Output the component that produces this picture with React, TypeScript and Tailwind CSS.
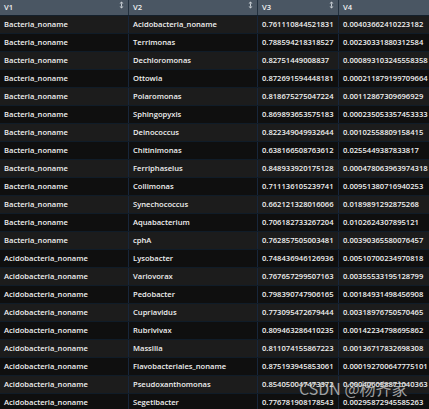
import React from "react";

const rows: [string, string, string, string][] = [
  ["Bacteria_noname", "Acidobacteria_noname", "0.761110844521831", "0.00403662410223182"],
  ["Bacteria_noname", "Terrimonas", "0.788594218318527", "0.00230331880312584"],
  ["Bacteria_noname", "Dechloromonas", "0.82751449008837", "0.000893103245558358"],
  ["Bacteria_noname", "Ottowia", "0.872691594448181", "0.000211879199709664"],
  ["Bacteria_noname", "Polaromonas", "0.818675275047224", "0.00112867309696929"],
  ["Bacteria_noname", "Sphingopyxis", "0.869893653575183", "0.000235053357453333"],
  ["Bacteria_noname", "Deinococcus", "0.822349049932644", "0.00102558809158415"],
  ["Bacteria_noname", "Chitinimonas", "0.638166508763612", "0.0255449387833817"],
  ["Bacteria_noname", "Ferriphaselus", "0.848933920175128", "0.000478063963974318"],
  ["Bacteria_noname", "Collimonas", "0.711136105239741", "0.00951380716940253"],
  ["Bacteria_noname", "Synechococcus", "0.662121328016066", "0.0189891292875268"],
  ["Bacteria_noname", "Aquabacterium", "0.706182733267204", "0.0102624307895121"],
  ["Bacteria_noname", "cphA", "0.762857505003481", "0.00390365580076457"],
  ["Acidobacteria_noname", "Lysobacter", "0.748436946126936", "0.00510700234970818"],
  ["Acidobacteria_noname", "Variovorax", "0.767657299507163", "0.00355533195128799"],
  ["Acidobacteria_noname", "Pedobacter", "0.798390747906165", "0.00184931498456908"],
  ["Acidobacteria_noname", "Cupriavidus", "0.773095472679444", "0.00318976750570465"],
  ["Acidobacteria_noname", "Rubrivivax", "0.809463286410235", "0.00142234798695862"],
  ["Acidobacteria_noname", "Massilia", "0.811074155867223", "0.00136717832698308"],
  ["Acidobacteria_noname", "Flavobacteriales_noname", "0.875193945853061", "0.000192700647775101"],
  ["Acidobacteria_noname", "Pseudoxanthomonas", "0.854050047473372", "0.000406058871040363"],
  ["Acidobacteria_noname", "Segetibacter", "0.776781908178543", "0.00295872945585263"],
];

const widths = ["w-[129px]", "w-[129px]", "w-[81px]", "w-[110px]"];

function SortIcon() {
  return (
    <svg width="5" height="8" viewBox="0 0 5 8" className="absolute right-[4px] top-[1px]">
      <path d="M2.5 0.5 L4.5 2.5 L0.5 2.5 Z" fill="#c8ced4" />
      <path d="M2.5 7.5 L4.5 5.5 L0.5 5.5 Z" fill="#c8ced4" />
      <rect x="2" y="2.5" width="1" height="3" fill="#c8ced4" />
    </svg>
  );
}

export default function App() {
  return (
    <div
      className="relative w-[429px] h-[409px] overflow-hidden bg-[#101010]"
      style={{ fontFamily: '"Open Sans", "Noto Sans", sans-serif' }}
    >
      <div className="flex w-[470px] h-[15px] bg-[#4a5663] border-b border-[#14202c] box-content">
        {["V1", "V2", "V3", "V4"].map((h, i) => (
          <div
            key={h}
            className={`relative ${widths[i]} shrink-0 h-[15px] pl-[4px] border-r border-[#22303e] text-[7.6px] font-semibold text-[#f2f2f2] leading-[15px]`}
          >
            {h}
            <SortIcon />
          </div>
        ))}
      </div>
      {rows.map((r, ri) => (
        <div
          key={ri}
          className={`flex w-[470px] h-[18px] border-b border-[#101c28] ${ri % 2 === 0 ? "bg-[#1c1c1c]" : "bg-[#0f0f0f]"}`}
        >
          {r.map((c, ci) => (
            <div
              key={ci}
              className={`${widths[ci]} shrink-0 h-[17px] pl-[4px] border-r border-[#18263a] text-[7.6px] font-semibold text-[#f0f0f0] leading-[17px] whitespace-nowrap overflow-hidden`}
            >
              {c}
            </div>
          ))}
        </div>
      ))}
      <div
        className="absolute left-[299px] top-[377px] text-[16px] leading-[22px] text-[#cfcfcf]/75 whitespace-nowrap"
        style={{ fontFamily: '"Noto Sans CJK SC", "Noto Sans", sans-serif' }}
      >
        CSDN @杨齐家
      </div>
    </div>
  );
}
